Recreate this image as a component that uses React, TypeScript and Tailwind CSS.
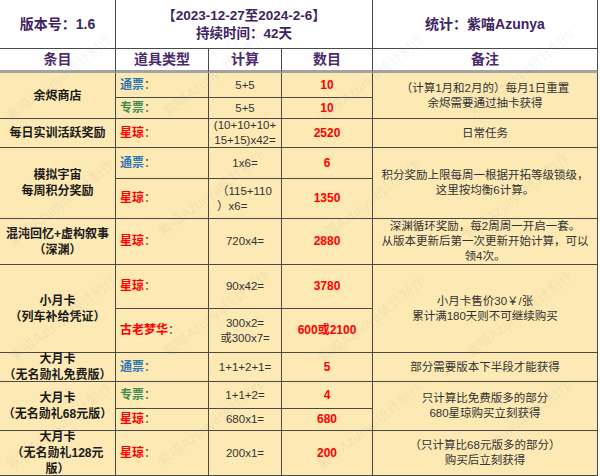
import React from "react";

const FONT = { fontFamily: '"Liberation Sans", "Noto Sans CJK SC", sans-serif' };

function Cell({
  className = "",
  children,
}: {
  className?: string;
  children?: React.ReactNode;
}) {
  return (
    <div
      className={
        "flex items-center justify-center text-center border-r border-b border-[#4a4a4a] leading-[15px] " +
        className
      }
    >
      {children}
    </div>
  );
}

function Label({ name, color }: { name: string; color: string }) {
  return (
    <span className="text-[12px]">
      <span className={"font-bold " + color}>{name}</span>
      <span className="text-[#444]">：</span>
    </span>
  );
}

const Y = "bg-[#fce9b4]";
const NAME = "font-bold text-[12px] text-[#1a1a1a] leading-[16px] " + Y;
const TYPE = "justify-start pl-[4px] " + Y;
const CALC = "text-[11.5px] text-[#333] " + Y;
const NUM = "font-bold text-[12px] text-[#ff0000] " + Y;
const NOTE = "text-[11.5px] text-[#333] " + Y;
const HEAD =
  "font-bold text-[14px] text-[#4a2a6c] bg-white border-b-[3px] border-b-[#a3a3a3]";

const BLUE = "text-[#2e75b6]";
const GREEN = "text-[#3e8e4e]";
const RED = "text-[#ff0000]";

const marks = [
  { x: 8, y: 110 },
  { x: 165, y: 105 },
  { x: 320, y: 110 },
  { x: 470, y: 105 },
  { x: 10, y: 235 },
  { x: 160, y: 225 },
  { x: 315, y: 235 },
  { x: 465, y: 228 },
  { x: 12, y: 350 },
  { x: 165, y: 345 },
  { x: 320, y: 352 },
  { x: 468, y: 346 },
  { x: 8, y: 458 },
  { x: 160, y: 455 },
  { x: 318, y: 458 },
  { x: 466, y: 455 },
];

export default function App() {
  return (
    <div
      className="relative w-[600px] h-[476px] overflow-hidden bg-white"
      style={FONT}
    >
      <div className="grid grid-cols-[116px_93px_73px_91px_225px] grid-rows-[49px_24px_25px_21px_29px_31px_40px_46px_44px_44px_29px_27px_22px_45px]">
        {/* title row */}
        <Cell className="row-start-1 col-start-1 bg-white font-bold text-[14px] text-[#3e2462]">
          版本号：1.6
        </Cell>
        <Cell className="row-start-1 col-start-2 col-span-3 bg-white font-bold text-[13.5px] text-[#3e2462] leading-[18px]">
          <div className="pt-[2px]">
            【2023-12-27至2024-2-6】
            <br />
            持续时间：42天
          </div>
        </Cell>
        <Cell className="row-start-1 col-start-5 bg-white font-bold text-[14px] text-[#3e2462]">
          统计：紫喵Azunya
        </Cell>

        {/* header */}
        <Cell className={"row-start-2 col-start-1 " + HEAD}>条目</Cell>
        <Cell className={"row-start-2 col-start-2 " + HEAD}>道具类型</Cell>
        <Cell className={"row-start-2 col-start-3 " + HEAD}>计算</Cell>
        <Cell className={"row-start-2 col-start-4 " + HEAD}>数目</Cell>
        <Cell className={"row-start-2 col-start-5 " + HEAD}>备注</Cell>

        {/* 余烬商店 */}
        <Cell className={"row-start-3 row-span-2 col-start-1 " + NAME}>余烬商店</Cell>
        <Cell className={"row-start-3 col-start-2 " + TYPE}>
          <Label name="通票" color={BLUE} />
        </Cell>
        <Cell className={"row-start-3 col-start-3 " + CALC}>5+5</Cell>
        <Cell className={"row-start-3 col-start-4 " + NUM}>10</Cell>
        <Cell className={"row-start-3 row-span-2 col-start-5 " + NOTE}>
          <div>
            （计算1月和2月的）每月1日重置
            <br />
            余烬需要通过抽卡获得
          </div>
        </Cell>
        <Cell className={"row-start-4 col-start-2 " + TYPE}>
          <Label name="专票" color={GREEN} />
        </Cell>
        <Cell className={"row-start-4 col-start-3 " + CALC}>5+5</Cell>
        <Cell className={"row-start-4 col-start-4 " + NUM}>10</Cell>

        {/* 每日实训 */}
        <Cell className={"row-start-5 col-start-1 " + NAME}>每日实训活跃奖励</Cell>
        <Cell className={"row-start-5 col-start-2 " + TYPE}>
          <Label name="星琼" color={RED} />
        </Cell>
        <Cell className={"row-start-5 col-start-3 leading-[14px] " + CALC}>
          <div>
            (10+10+10+
            <br />
            15+15)x42=
          </div>
        </Cell>
        <Cell className={"row-start-5 col-start-4 " + NUM}>2520</Cell>
        <Cell className={"row-start-5 col-start-5 " + NOTE}>日常任务</Cell>

        {/* 模拟宇宙 */}
        <Cell className={"row-start-6 row-span-2 col-start-1 " + NAME}>
          <div>
            模拟宇宙
            <br />
            每周积分奖励
          </div>
        </Cell>
        <Cell className={"row-start-6 col-start-2 " + TYPE}>
          <Label name="通票" color={BLUE} />
        </Cell>
        <Cell className={"row-start-6 col-start-3 " + CALC}>1x6=</Cell>
        <Cell className={"row-start-6 col-start-4 " + NUM}>6</Cell>
        <Cell className={"row-start-6 row-span-2 col-start-5 " + NOTE}>
          <div>
            积分奖励上限每周一根据开拓等级锁级，
            <br />
            这里按均衡6计算。
          </div>
        </Cell>
        <Cell className={"row-start-7 col-start-2 " + TYPE}>
          <Label name="星琼" color={RED} />
        </Cell>
        <Cell className={"row-start-7 col-start-3 " + CALC}>
          <div className="text-left pl-[8px] w-full">
            （115+110
            <br />
            ）x6=
          </div>
        </Cell>
        <Cell className={"row-start-7 col-start-4 " + NUM}>1350</Cell>

        {/* 混沌回忆 */}
        <Cell className={"row-start-8 col-start-1 " + NAME}>
          <div>
            混沌回忆+虚构叙事
            <br />
            （深渊）
          </div>
        </Cell>
        <Cell className={"row-start-8 col-start-2 " + TYPE}>
          <Label name="星琼" color={RED} />
        </Cell>
        <Cell className={"row-start-8 col-start-3 " + CALC}>720x4=</Cell>
        <Cell className={"row-start-8 col-start-4 " + NUM}>2880</Cell>
        <Cell className={"row-start-8 col-start-5 " + NOTE}>
          <div>
            深渊循环奖励，每2周周一开启一套。
            <br />
            从版本更新后第一次更新开始计算，可以
            <br />
            领4次。
          </div>
        </Cell>

        {/* 小月卡 */}
        <Cell className={"row-start-9 row-span-2 col-start-1 " + NAME}>
          <div>
            小月卡
            <br />
            （列车补给凭证）
          </div>
        </Cell>
        <Cell className={"row-start-9 col-start-2 " + TYPE}>
          <Label name="星琼" color={RED} />
        </Cell>
        <Cell className={"row-start-9 col-start-3 " + CALC}>90x42=</Cell>
        <Cell className={"row-start-9 col-start-4 " + NUM}>3780</Cell>
        <Cell className={"row-start-9 row-span-2 col-start-5 " + NOTE}>
          <div>
            小月卡售价30￥/张
            <br />
            累计满180天则不可继续购买
          </div>
        </Cell>
        <Cell className={"row-start-10 col-start-2 " + TYPE}>
          <Label name="古老梦华" color={RED} />
        </Cell>
        <Cell className={"row-start-10 col-start-3 " + CALC}>
          <div>
            300x2=
            <br />
            或300x7=
          </div>
        </Cell>
        <Cell className={"row-start-10 col-start-4 whitespace-nowrap " + NUM}>600或2100</Cell>

        {/* 大月卡 免费 */}
        <Cell className={"row-start-11 col-start-1 leading-[14px] " + NAME}>
          <div>
            大月卡
            <br />
            （无名勋礼免费版）
          </div>
        </Cell>
        <Cell className={"row-start-11 col-start-2 " + TYPE}>
          <Label name="通票" color={BLUE} />
        </Cell>
        <Cell className={"row-start-11 col-start-3 " + CALC}>1+1+2+1=</Cell>
        <Cell className={"row-start-11 col-start-4 " + NUM}>5</Cell>
        <Cell className={"row-start-11 col-start-5 " + NOTE}>部分需要版本下半段才能获得</Cell>

        {/* 大月卡 68 */}
        <Cell className={"row-start-12 row-span-2 col-start-1 " + NAME}>
          <div>
            大月卡
            <br />
            （无名勋礼68元版）
          </div>
        </Cell>
        <Cell className={"row-start-12 col-start-2 " + TYPE}>
          <Label name="专票" color={GREEN} />
        </Cell>
        <Cell className={"row-start-12 col-start-3 " + CALC}>1+1+2=</Cell>
        <Cell className={"row-start-12 col-start-4 " + NUM}>4</Cell>
        <Cell className={"row-start-12 row-span-2 col-start-5 " + NOTE}>
          <div>
            只计算比免费版多的部分
            <br />
            680星琼购买立刻获得
          </div>
        </Cell>
        <Cell className={"row-start-13 col-start-2 " + TYPE}>
          <Label name="星琼" color={RED} />
        </Cell>
        <Cell className={"row-start-13 col-start-3 " + CALC}>680x1=</Cell>
        <Cell className={"row-start-13 col-start-4 " + NUM}>680</Cell>

        {/* 大月卡 128 */}
        <Cell className={"row-start-14 col-start-1 leading-[14px] " + NAME}>
          <div>
            大月卡
            <br />
            （无名勋礼128元
            <br />
            版）
          </div>
        </Cell>
        <Cell className={"row-start-14 col-start-2 " + TYPE}>
          <Label name="星琼" color={RED} />
        </Cell>
        <Cell className={"row-start-14 col-start-3 " + CALC}>200x1=</Cell>
        <Cell className={"row-start-14 col-start-4 " + NUM}>200</Cell>
        <Cell className={"row-start-14 col-start-5 " + NOTE}>
          <div>
            （只计算比68元版多的部分）
            <br />
            购买后立刻获得
          </div>
        </Cell>
      </div>

      {/* watermark overlay */}
      <div className="pointer-events-none absolute inset-0">
        {marks.map((m, i) => (
          <div
            key={i}
            className="absolute whitespace-nowrap text-[14px] leading-[16px] text-[rgba(120,110,130,0.09)] origin-left"
            style={{ left: m.x, top: m.y, transform: "rotate(-38deg)" }}
          >
            紫喵Azunya统计制作
          </div>
        ))}
      </div>
    </div>
  );
}
